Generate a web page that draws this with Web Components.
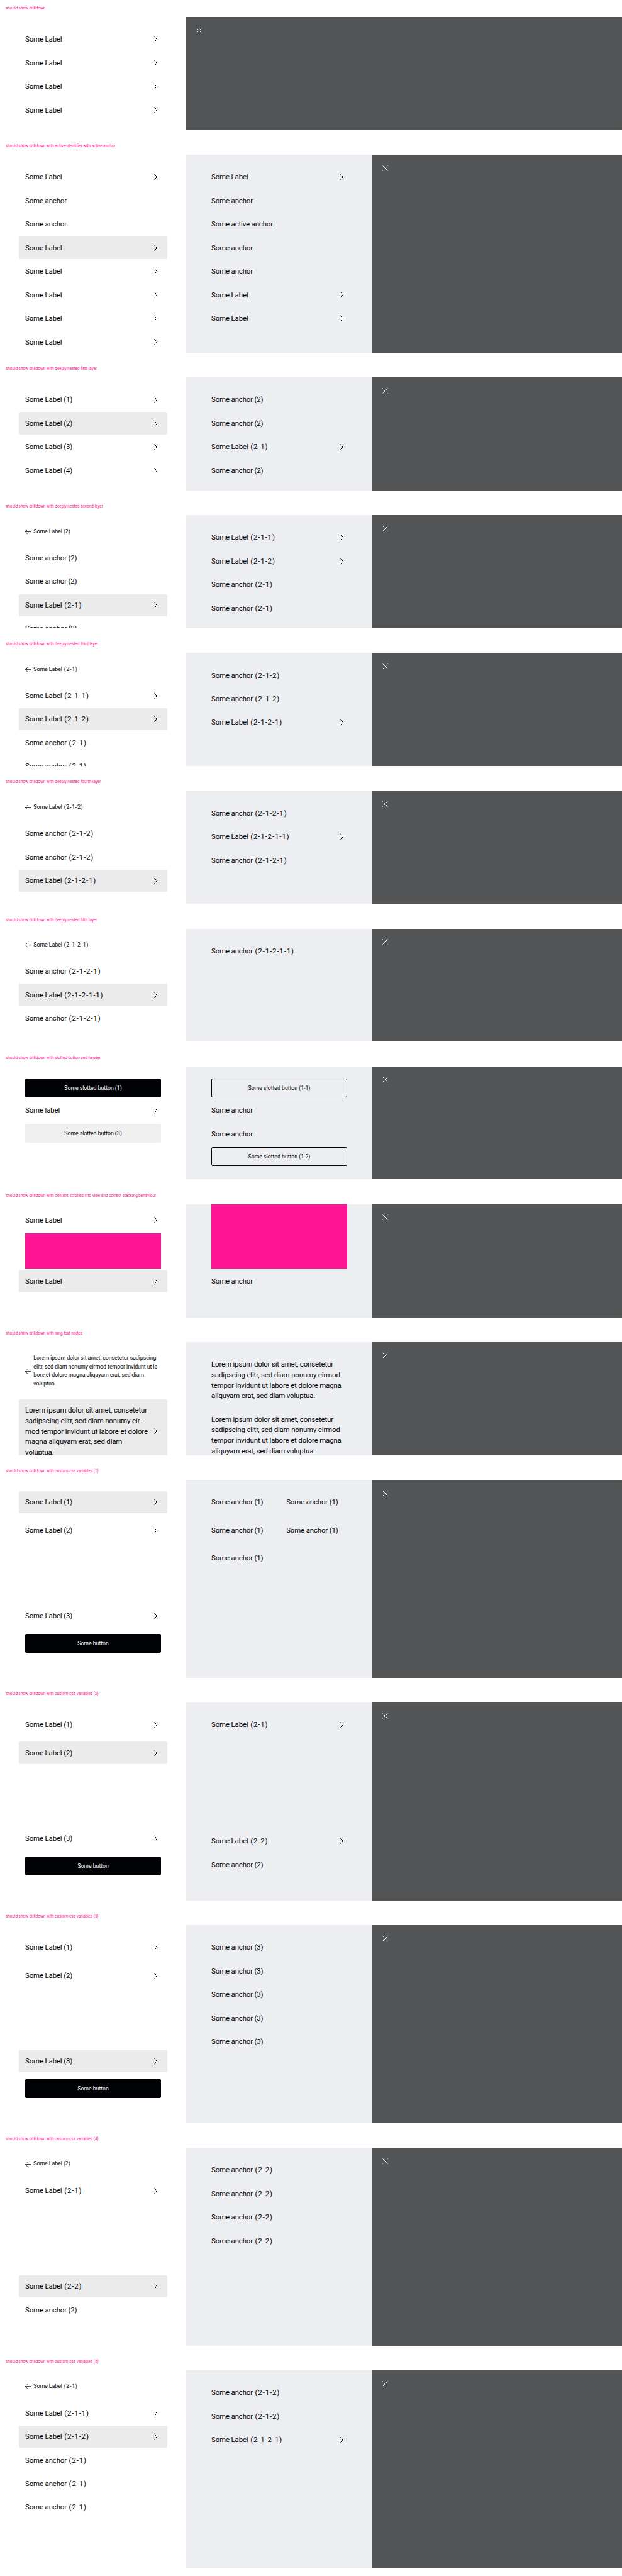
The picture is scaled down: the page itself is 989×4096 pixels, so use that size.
<!DOCTYPE html>
<html lang="en">
<head>
<meta charset="utf-8">
<title>Drilldown overview</title>
<style>
:root{--u:.56188px}
html,body{margin:0;padding:0;background:#fff}
body{font-family:Roboto,"Liberation Sans",sans-serif;color:#010205;width:989px;height:4096px;overflow:hidden}
</style>
</head>
<body>
<drill-overview></drill-overview>
<script>
const define = (name, html, setup) => {
  const t = document.createElement('template');
  t.innerHTML = html;
  customElements.define(name, class extends HTMLElement {
    constructor() {
      super();
      this.attachShadow({ mode: 'open' }).append(t.content.cloneNode(true));
    }
    connectedCallback() { if (setup) setup(this, this.shadowRoot); }
  });
};

/* One story: a pink headline above the drilldown with its columns and backdrop */
define('drill-case', `<style>
:host{display:block;padding-bottom:calc(var(--u)*22)}
h2{margin:0;height:calc(var(--u)*48);padding-left:calc(var(--u)*16);font-weight:400;font-size:calc(var(--u)*11.35);line-height:calc(var(--u)*48);color:#ff1493;white-space:nowrap}
.stage{display:flex;height:calc(var(--u)*320);overflow:hidden}
:host([tall]) .stage{height:calc(var(--u)*560)}
.backdrop{flex:1;background:#535456;padding:calc(var(--u)*29.5) 0 0 calc(var(--u)*29)}
svg{display:block;width:calc(var(--u)*16);height:calc(var(--u)*16)}
</style><h2></h2><div class="stage"><slot></slot><div class="backdrop"><svg viewBox="0 0 16 16"><path d="M.8.8l14.4 14.4M15.2.8L.8 15.2" stroke="#fff" stroke-width="1.6" fill="none"/></svg></div></div>`,
(h, r) => { r.querySelector('h2').textContent = h.getAttribute('heading'); });

define('drill-level', `<style>
:host{display:flex;flex-direction:column;flex:none;box-sizing:border-box;width:calc(var(--u)*526.8);height:100%;overflow:hidden;gap:calc(var(--u)*4);padding:calc(var(--u)*32) calc(var(--u)*71.4) calc(var(--u)*69.5)}
:host([secondary]){background:#edeef2}
:host([loose]){gap:calc(var(--u)*16.5)}
:host([scrolled]){padding-top:calc(var(--u)*13.3)}
:host([cut]){padding-top:0}
:host([columns]){display:grid;grid-template-columns:calc(var(--u)*212) 1fr;align-content:start;gap:calc(var(--u)*16.5) 0}
</style><slot></slot>`);

const splitCode = (h, r) => {
  const [, text, code] = h.getAttribute('text').match(/^(.*?)(\s*\([\d-]+\))?$/);
  r.querySelector('.t').textContent = text;
  if (code) {
    const c = r.querySelector('.c');
    c.textContent = code;
    if (code.includes('-')) c.classList.add('dashed');
  }
};

define('drill-item', `<style>
:host{display:flex;flex:none;align-items:center;justify-content:space-between;box-sizing:border-box;padding:calc(var(--u)*16.5) calc(var(--u)*18.5);margin:0 calc(var(--u)*-18.5);border-radius:calc(var(--u)*4);font-size:calc(var(--u)*20.4);line-height:calc(var(--u)*29.7);letter-spacing:-.014em;white-space:nowrap}
:host([active]){background:#ebebeb}
:host([push]){margin-top:auto}
:host([current]) .t{text-decoration:underline;text-decoration-thickness:1px;text-underline-offset:2px}
.c{white-space:pre}
.dashed{letter-spacing:.075em}
svg{display:none;flex:none;width:calc(var(--u)*9);height:calc(var(--u)*16);margin-right:calc(var(--u)*10.5)}
:host([more]) svg{display:block}
</style><div><span class="t"></span><span class="c"></span><slot></slot></div><svg viewBox="0 0 9 16"><path d="M.9.7L7.9 8 .9 15.3" stroke="#010205" stroke-width="1.7" fill="none"/></svg>`,
(h, r) => { if (h.hasAttribute('text')) splitCode(h, r); });

define('drill-back', `<style>
:host{display:flex;flex:none;align-items:center;padding-top:calc(var(--u)*2.6);margin-bottom:calc(var(--u)*27.2);font-size:calc(var(--u)*15.8);line-height:calc(var(--u)*24.05);letter-spacing:-.01em;white-space:nowrap}
svg{flex:none;width:calc(var(--u)*16);height:calc(var(--u)*13);margin-right:calc(var(--u)*7.5)}
.c{white-space:pre}
.dashed{letter-spacing:.075em}
</style><svg viewBox="0 0 16 13"><path d="M6.3.5L.9 6.5l5.4 6M.9 6.5H16" stroke="#010205" stroke-width="1.5" fill="none"/></svg><div><span class="t"></span><span class="c"></span><slot></slot></div>`,
(h, r) => { if (h.hasAttribute('text')) splitCode(h, r); });

define('drill-button', `<style>
:host{display:flex;flex:none;align-items:center;justify-content:center;box-sizing:border-box;height:calc(var(--u)*54);margin:calc(var(--u)*2) 0 calc(var(--u)*1.2);border-radius:calc(var(--u)*4);background:#010205;color:#fff;font-size:calc(var(--u)*15.5);letter-spacing:0}
:host([soft]){background:#f0f0f0;color:#010205}
:host([outline]){background:none;color:#010205;border:1px solid #010205}
</style><slot></slot>`);

define('color-block', `<style>
:host{display:block;flex:none;height:calc(var(--u)*100);margin:calc(var(--u)*2) 0 calc(var(--u)*1);background:#ff1493}
:host([big]){height:calc(var(--u)*182);margin-top:0}
</style>`);

define('drill-overview', `<style>:host{display:block}</style>
<drill-case heading="should show drilldown">
  <drill-level><drill-item more text="Some Label"></drill-item><drill-item more text="Some Label"></drill-item><drill-item more text="Some Label"></drill-item><drill-item more text="Some Label"></drill-item></drill-level>
</drill-case>
<drill-case tall heading="should show drilldown with active-identifier with active anchor">
  <drill-level><drill-item more text="Some Label"></drill-item><drill-item text="Some anchor"></drill-item><drill-item text="Some anchor"></drill-item><drill-item active more text="Some Label"></drill-item><drill-item more text="Some Label"></drill-item><drill-item more text="Some Label"></drill-item><drill-item more text="Some Label"></drill-item><drill-item more text="Some Label"></drill-item></drill-level>
  <drill-level secondary><drill-item more text="Some Label"></drill-item><drill-item text="Some anchor"></drill-item><drill-item current text="Some active anchor"></drill-item><drill-item text="Some anchor"></drill-item><drill-item text="Some anchor"></drill-item><drill-item more text="Some Label"></drill-item><drill-item more text="Some Label"></drill-item></drill-level>
</drill-case>
<drill-case heading="should show drilldown with deeply nested first layer">
  <drill-level><drill-item more text="Some Label (1)"></drill-item><drill-item active more text="Some Label (2)"></drill-item><drill-item more text="Some Label (3)"></drill-item><drill-item more text="Some Label (4)"></drill-item></drill-level>
  <drill-level secondary><drill-item text="Some anchor (2)"></drill-item><drill-item text="Some anchor (2)"></drill-item><drill-item more text="Some Label (2-1)"></drill-item><drill-item text="Some anchor (2)"></drill-item></drill-level>
</drill-case>
<drill-case heading="should show drilldown with deeply nested second layer">
  <drill-level><drill-back text="Some Label (2)"></drill-back><drill-item text="Some anchor (2)"></drill-item><drill-item text="Some anchor (2)"></drill-item><drill-item active more text="Some Label (2-1)"></drill-item><drill-item text="Some anchor (2)"></drill-item></drill-level>
  <drill-level secondary><drill-item more text="Some Label (2-1-1)"></drill-item><drill-item more text="Some Label (2-1-2)"></drill-item><drill-item text="Some anchor (2-1)"></drill-item><drill-item text="Some anchor (2-1)"></drill-item></drill-level>
</drill-case>
<drill-case heading="should show drilldown with deeply nested third layer">
  <drill-level><drill-back text="Some Label (2-1)"></drill-back><drill-item more text="Some Label (2-1-1)"></drill-item><drill-item active more text="Some Label (2-1-2)"></drill-item><drill-item text="Some anchor (2-1)"></drill-item><drill-item text="Some anchor (2-1)"></drill-item></drill-level>
  <drill-level secondary><drill-item text="Some anchor (2-1-2)"></drill-item><drill-item text="Some anchor (2-1-2)"></drill-item><drill-item more text="Some Label (2-1-2-1)"></drill-item></drill-level>
</drill-case>
<drill-case heading="should show drilldown with deeply nested fourth layer">
  <drill-level><drill-back text="Some Label (2-1-2)"></drill-back><drill-item text="Some anchor (2-1-2)"></drill-item><drill-item text="Some anchor (2-1-2)"></drill-item><drill-item active more text="Some Label (2-1-2-1)"></drill-item></drill-level>
  <drill-level secondary><drill-item text="Some anchor (2-1-2-1)"></drill-item><drill-item more text="Some Label (2-1-2-1-1)"></drill-item><drill-item text="Some anchor (2-1-2-1)"></drill-item></drill-level>
</drill-case>
<drill-case heading="should show drilldown with deeply nested fifth layer">
  <drill-level><drill-back text="Some Label (2-1-2-1)"></drill-back><drill-item text="Some anchor (2-1-2-1)"></drill-item><drill-item active more text="Some Label (2-1-2-1-1)"></drill-item><drill-item text="Some anchor (2-1-2-1)"></drill-item></drill-level>
  <drill-level secondary><drill-item text="Some anchor (2-1-2-1-1)"></drill-item></drill-level>
</drill-case>
<drill-case heading="should show drilldown with slotted button and header">
  <drill-level><drill-button>Some slotted button (1)</drill-button><drill-item more text="Some label"></drill-item><drill-button soft>Some slotted button (3)</drill-button></drill-level>
  <drill-level secondary><drill-button outline>Some slotted button (1-1)</drill-button><drill-item text="Some anchor"></drill-item><drill-item text="Some anchor"></drill-item><drill-button outline>Some slotted button (1-2)</drill-button></drill-level>
</drill-case>
<drill-case heading="should show drilldown with content scrolled into view and correct stacking behaviour">
  <drill-level scrolled><drill-item more text="Some Label"></drill-item><color-block></color-block><drill-item active more text="Some Label"></drill-item></drill-level>
  <drill-level secondary cut><color-block big></color-block><drill-item text="Some anchor"></drill-item></drill-level>
</drill-case>
<drill-case heading="should show drilldown with long text nodes">
  <drill-level><drill-back>Lorem ipsum dolor sit amet, consetetur sadipscing<br>elitr, sed diam nonumy eirmod tempor invidunt ut la-<br>bore et dolore magna aliquyam erat, sed diam<br>voluptua.</drill-back><drill-item active more>Lorem ipsum dolor sit amet, consetetur<br>sadipscing elitr, sed diam nonumy eir-<br>mod tempor invidunt ut labore et dolore<br>magna aliquyam erat, sed diam<br>voluptua.</drill-item></drill-level>
  <drill-level secondary><drill-item>Lorem ipsum dolor sit amet, consetetur<br>sadipscing elitr, sed diam nonumy eirmod<br>tempor invidunt ut labore et dolore magna<br>aliquyam erat, sed diam voluptua.</drill-item><drill-item>Lorem ipsum dolor sit amet, consetetur<br>sadipscing elitr, sed diam nonumy eirmod<br>tempor invidunt ut labore et dolore magna<br>aliquyam erat, sed diam voluptua.</drill-item></drill-level>
</drill-case>
<drill-case tall heading="should show drilldown with custom css variables (1)">
  <drill-level loose><drill-item active more text="Some Label (1)"></drill-item><drill-item more text="Some Label (2)"></drill-item><drill-item push more text="Some Label (3)"></drill-item><drill-button>Some button</drill-button></drill-level>
  <drill-level secondary columns><drill-item text="Some anchor (1)"></drill-item><drill-item text="Some anchor (1)"></drill-item><drill-item text="Some anchor (1)"></drill-item><drill-item text="Some anchor (1)"></drill-item><drill-item text="Some anchor (1)"></drill-item></drill-level>
</drill-case>
<drill-case tall heading="should show drilldown with custom css variables (2)">
  <drill-level loose><drill-item more text="Some Label (1)"></drill-item><drill-item active more text="Some Label (2)"></drill-item><drill-item push more text="Some Label (3)"></drill-item><drill-button>Some button</drill-button></drill-level>
  <drill-level secondary><drill-item more text="Some Label (2-1)"></drill-item><drill-item push more text="Some Label (2-2)"></drill-item><drill-item text="Some anchor (2)"></drill-item></drill-level>
</drill-case>
<drill-case tall heading="should show drilldown with custom css variables (3)">
  <drill-level loose><drill-item more text="Some Label (1)"></drill-item><drill-item more text="Some Label (2)"></drill-item><drill-item push active more text="Some Label (3)"></drill-item><drill-button>Some button</drill-button></drill-level>
  <drill-level secondary><drill-item text="Some anchor (3)"></drill-item><drill-item text="Some anchor (3)"></drill-item><drill-item text="Some anchor (3)"></drill-item><drill-item text="Some anchor (3)"></drill-item><drill-item text="Some anchor (3)"></drill-item></drill-level>
</drill-case>
<drill-case tall heading="should show drilldown with custom css variables (4)">
  <drill-level><drill-back text="Some Label (2)"></drill-back><drill-item more text="Some Label (2-1)"></drill-item><drill-item push active more text="Some Label (2-2)"></drill-item><drill-item text="Some anchor (2)"></drill-item></drill-level>
  <drill-level secondary><drill-item text="Some anchor (2-2)"></drill-item><drill-item text="Some anchor (2-2)"></drill-item><drill-item text="Some anchor (2-2)"></drill-item><drill-item text="Some anchor (2-2)"></drill-item></drill-level>
</drill-case>
<drill-case tall heading="should show drilldown with custom css variables (5)">
  <drill-level><drill-back text="Some Label (2-1)"></drill-back><drill-item more text="Some Label (2-1-1)"></drill-item><drill-item active more text="Some Label (2-1-2)"></drill-item><drill-item text="Some anchor (2-1)"></drill-item><drill-item text="Some anchor (2-1)"></drill-item><drill-item text="Some anchor (2-1)"></drill-item></drill-level>
  <drill-level secondary><drill-item text="Some anchor (2-1-2)"></drill-item><drill-item text="Some anchor (2-1-2)"></drill-item><drill-item more text="Some Label (2-1-2-1)"></drill-item></drill-level>
</drill-case>`);
</script>
</body>
</html>
